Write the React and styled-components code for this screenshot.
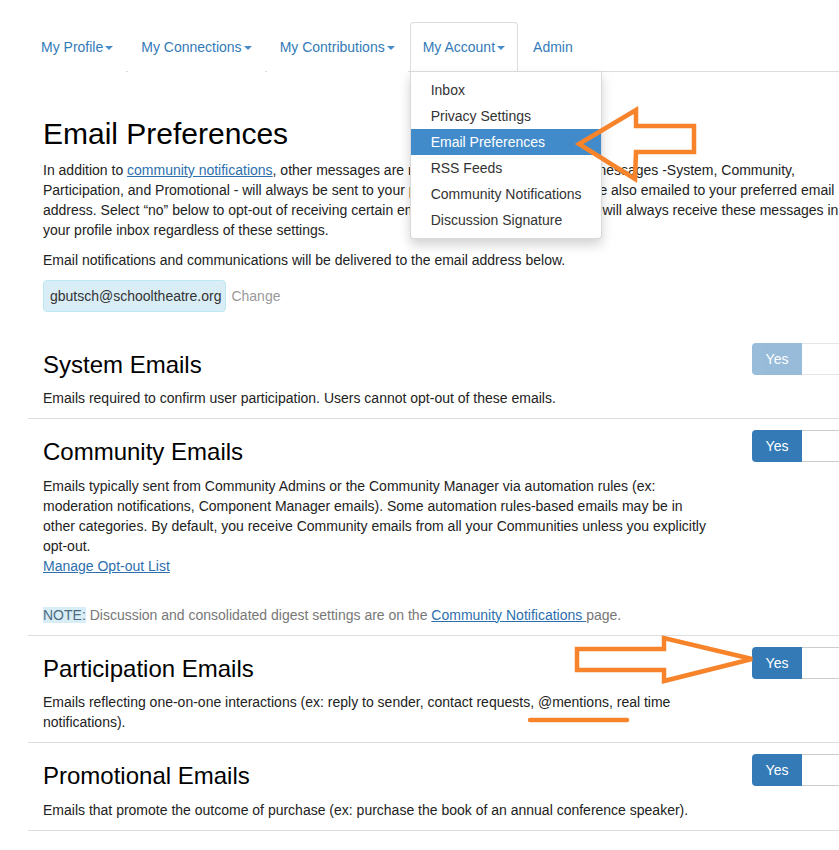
import styled, { createGlobalStyle } from "styled-components";

const GlobalStyle = createGlobalStyle`
  html, body {
    margin: 0;
    overflow-x: hidden;
    background: #fff;
  }
  body {
    font-family: "Liberation Sans", Arial, sans-serif;
    font-size: 14px;
    line-height: 20px;
    color: #222;
  }
`;

const TABS = [
  { label: "My Profile", caret: true },
  { label: "My Connections", caret: true },
  { label: "My Contributions", caret: true },
  { label: "My Account", caret: true, open: true },
  { label: "Admin" },
];

const MENU = [
  "Inbox",
  "Privacy Settings",
  "Email Preferences",
  "RSS Feeds",
  "Community Notifications",
  "Discussion Signature",
];

export default function App() {
  return (
    <>
      <GlobalStyle />
      <Page>
        <Tabs>
          {TABS.map((t) => (
            <TabItem key={t.label}>
              <TabLink $active={t.open}>
                {t.label}
                {t.caret && <Caret />}
              </TabLink>
              {t.open && (
                <Menu>
                  {MENU.map((m) => (
                    <MenuItem key={m} $active={m === "Email Preferences"}>
                      {m}
                    </MenuItem>
                  ))}
                </Menu>
              )}
            </TabItem>
          ))}
        </Tabs>

        <Content>
          <Title>Email Preferences</Title>
          <Intro>
            In addition to <Link>community notifications</Link>, other messages
            are received in your inbox. These messages -System, Community,
            Participation, and Promotional - will always be sent to your profile
            inbox, and the emails are also emailed to your preferred email
            address. Select “no” below to opt-out of receiving certain emails.
            However, notice that you will always receive these messages in your
            profile inbox regardless of these settings.
          </Intro>
          <Text>
            Email notifications and communications will be delivered to the
            email address below.
          </Text>
          <EmailRow>
            <EmailBadge>gbutsch@schooltheatre.org</EmailBadge>
            <ChangeLink>Change</ChangeLink>
          </EmailRow>
        </Content>

        <Section>
          <SectionBody>
            <SectionTitle>System Emails</SectionTitle>
            <Text>
              Emails required to confirm user participation. Users cannot
              opt-out of these emails.
            </Text>
          </SectionBody>
          <Toggle $disabled />
        </Section>

        <Section>
          <SectionBody>
            <SectionTitle>Community Emails</SectionTitle>
            <Text>
              Emails typically sent from Community Admins or the Community
              Manager via automation rules (ex: moderation notifications,
              Component Manager emails). Some automation rules-based emails may
              be in other categories. By default, you receive Community emails
              from all your Communities unless you explicitly opt-out.
              <br />
              <Link>Manage Opt-out List</Link>
            </Text>
            <Note>
              <NoteTag>NOTE:</NoteTag> Discussion and consolidated digest
              settings are on the <Link>Community Notifications </Link>page.
            </Note>
          </SectionBody>
          <Toggle />
        </Section>

        <Section>
          <SectionBody>
            <SectionTitle>Participation Emails</SectionTitle>
            <Text>
              Emails reflecting one-on-one interactions (ex: reply to sender,
              contact requests, @mentions, real time notifications).
            </Text>
          </SectionBody>
          <Toggle />
        </Section>

        <Section>
          <SectionBody>
            <SectionTitle>Promotional Emails</SectionTitle>
            <Text>
              Emails that promote the outcome of purchase (ex: purchase the book
              of an annual conference speaker).
            </Text>
          </SectionBody>
          <Toggle />
        </Section>
      </Page>

      <Annotations width="839" height="850" viewBox="0 0 839 850">
        <polygon points="579,144 636,110 636,126 694,126 694,152 636,152 635,179" />
        <polygon points="577,649 664,649 664,638 752,659 664,681 664,670 577,670" />
        <line x1="530" y1="720" x2="627" y2="720" strokeLinecap="round" />
      </Annotations>
    </>
  );
}

function Toggle({ $disabled }) {
  return (
    <ToggleBox $disabled={$disabled}>
      <ToggleOn>Yes</ToggleOn>
      <ToggleHandle />
    </ToggleBox>
  );
}

const Page = styled.div`
  margin-left: 28px;
  width: 852px;
  padding-top: 22px;
`;

const Tabs = styled.ul`
  display: flex;
  margin: 0;
  padding: 0;
  list-style: none;
  border-bottom: 1px solid #ddd;
`;

const TabItem = styled.li`
  position: relative;
  margin-bottom: -1px;
`;

const TabLink = styled.a`
  display: block;
  margin-right: 2px;
  padding: 14px 12px;
  line-height: 20px;
  color: #337ab7;
  border: 1px solid ${(p) => (p.$active ? "#ddd" : "transparent")};
  border-bottom-color: transparent;
  border-radius: 4px 4px 0 0;
  background: #fff;
  cursor: pointer;
`;

const Caret = styled.span`
  display: inline-block;
  width: 0;
  height: 0;
  margin-left: 2px;
  vertical-align: middle;
  border-top: 4px solid #4a8bc8;
  border-left: 4px solid transparent;
  border-right: 4px solid transparent;
`;

const Menu = styled.ul`
  position: absolute;
  top: 100%;
  left: 0;
  z-index: 10;
  margin: -1px 0 0;
  padding: 5px 0;
  list-style: none;
  background: #fff;
  border: 1px solid rgba(0, 0, 0, 0.15);
  border-radius: 0 0 4px 4px;
  box-shadow: 0 6px 12px rgba(0, 0, 0, 0.175);
  white-space: nowrap;
`;

const MenuItem = styled.li`
  padding: 3px 19px 3px 20px;
  line-height: 20px;
  color: ${(p) => (p.$active ? "#fff" : "#333")};
  background: ${(p) => (p.$active ? "#428bca" : "transparent")};
`;

const Content = styled.div`
  padding: 0 15px;
`;

const Title = styled.h1`
  margin: 45px 0 10px;
  font-size: 30px;
  font-weight: 400;
  line-height: 1.1;
  color: #000;
`;

const Text = styled.p`
  margin: 0 0 10px;
`;

const Intro = styled(Text)`
  width: 807px;
`;

const Link = styled.a`
  color: #2d6fae;
  text-decoration: underline;
  cursor: pointer;
`;

const EmailRow = styled.div`
  display: flex;
  align-items: center;
  gap: 5px;
  margin-bottom: 20px;
`;

const EmailBadge = styled.span`
  padding: 5px 4px 5px 6px;
  color: #333;
  background: #d9edf7;
  border: 1px solid #bce8f1;
  border-radius: 4px;
`;

const ChangeLink = styled.span`
  color: #999;
`;

const Section = styled.section`
  display: flex;
  align-items: flex-start;
  padding: 0 15px;
  border-bottom: 1px solid #ddd;
`;

const SectionBody = styled.div`
  width: 672px;
`;

const SectionTitle = styled.h2`
  margin: 20px 0 10px;
  font-size: 24px;
  font-weight: 400;
  line-height: 1.1;
  color: #000;
`;

const Note = styled.p`
  margin: 29px 0 10px;
  color: #777;
`;

const NoteTag = styled.span`
  color: #4d6a80;
  background: #d9edf7;
`;

const ToggleBox = styled.div`
  display: flex;
  margin: 11px 0 0 auto;
  height: 32px;
  opacity: ${(p) => (p.$disabled ? 0.5 : 1)};
`;

const ToggleOn = styled.div`
  display: flex;
  align-items: center;
  justify-content: center;
  width: 50px;
  color: #fff;
  background: #337ab7;
  border-radius: 4px 0 0 4px;
`;

const ToggleHandle = styled.div`
  box-sizing: border-box;
  width: 63px;
  background: #fff;
  border: 1px solid #ccc;
  border-left: none;
  border-radius: 0 4px 4px 0;
`;

const Annotations = styled.svg`
  position: absolute;
  top: 0;
  left: 0;
  z-index: 20;
  pointer-events: none;
  fill: none;
  stroke: #f7832a;
  stroke-width: 4.5;
`;
